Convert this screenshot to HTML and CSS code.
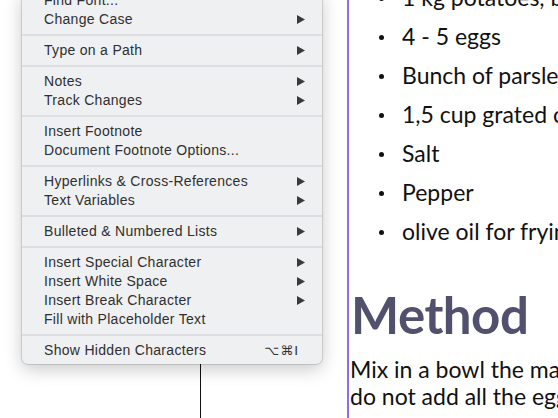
FILE: index.html
```html
<!DOCTYPE html>
<html>
<head>
<meta charset="utf-8">
<link rel="stylesheet" href="styles.css">
</head>
<body>
<div class="page">
  <div class="col-left"></div>
  <div class="frame">
    <ul class="list">
      <li><span class="dot"></span>1 kg potatoes, boiled</li>
      <li><span class="dot"></span>4 - 5 eggs</li>
      <li><span class="dot"></span>Bunch of parsley</li>
      <li><span class="dot"></span>1,5 cup grated cheese</li>
      <li><span class="dot"></span>Salt</li>
      <li><span class="dot"></span>Pepper</li>
      <li><span class="dot"></span>olive oil for frying</li>
    </ul>
    <h1 class="heading">Method</h1>
    <p class="body-text">Mix in a bowl the mashed potatoes,<br>do not add all the eggs at once</p>
  </div>
</div>

<div class="menu">
  <div class="item"><span>Find Font...</span></div>
  <div class="item"><span>Change Case</span><svg class="arrow" viewBox="0 0 8 9"><path d="M0 0L8 4.5L0 9Z"/></svg></div>
  <div class="sep"></div>
  <div class="item"><span>Type on a Path</span><svg class="arrow" viewBox="0 0 8 9"><path d="M0 0L8 4.5L0 9Z"/></svg></div>
  <div class="sep"></div>
  <div class="item"><span>Notes</span><svg class="arrow" viewBox="0 0 8 9"><path d="M0 0L8 4.5L0 9Z"/></svg></div>
  <div class="item"><span>Track Changes</span><svg class="arrow" viewBox="0 0 8 9"><path d="M0 0L8 4.5L0 9Z"/></svg></div>
  <div class="sep"></div>
  <div class="item"><span>Insert Footnote</span></div>
  <div class="item"><span>Document Footnote Options...</span></div>
  <div class="sep"></div>
  <div class="item"><span>Hyperlinks &amp; Cross-References</span><svg class="arrow" viewBox="0 0 8 9"><path d="M0 0L8 4.5L0 9Z"/></svg></div>
  <div class="item"><span>Text Variables</span><svg class="arrow" viewBox="0 0 8 9"><path d="M0 0L8 4.5L0 9Z"/></svg></div>
  <div class="sep"></div>
  <div class="item"><span>Bulleted &amp; Numbered Lists</span><svg class="arrow" viewBox="0 0 8 9"><path d="M0 0L8 4.5L0 9Z"/></svg></div>
  <div class="sep"></div>
  <div class="item"><span>Insert Special Character</span><svg class="arrow" viewBox="0 0 8 9"><path d="M0 0L8 4.5L0 9Z"/></svg></div>
  <div class="item"><span>Insert White Space</span><svg class="arrow" viewBox="0 0 8 9"><path d="M0 0L8 4.5L0 9Z"/></svg></div>
  <div class="item"><span>Insert Break Character</span><svg class="arrow" viewBox="0 0 8 9"><path d="M0 0L8 4.5L0 9Z"/></svg></div>
  <div class="item"><span>Fill with Placeholder Text</span></div>
  <div class="sep"></div>
  <div class="item"><span>Show Hidden Characters</span><span class="shortcut">⌥⌘I</span></div>
</div>
</body>
</html>
```

FILE: styles.css
```css
html, body {
  margin: 0;
  padding: 0;
  background: #ffffff;
  overflow: hidden;
}
body {
  width: 558px;
  height: 418px;
  position: relative;
}
.page {
  display: flex;
  height: 418px;
}
.col-left {
  width: 200px;
  border-right: 1px solid #111111;
  flex: none;
}
.frame {
  margin-left: 146px;
  border-left: 2px solid #8b6df1;
  flex: none;
  width: 210px;
  overflow: hidden;
  white-space: nowrap;
  font-family: "Lato", "Open Sans", sans-serif;
  color: #111111;
}
.list {
  list-style: none;
  margin: -23px 0 0 0;
  padding: 0 0 0 30px;
}
.list li {
  display: flex;
  align-items: center;
  height: 39px;
  font-size: 23px;
}
.dot {
  width: 5px;
  height: 5px;
  border-radius: 50%;
  background: #111111;
  margin-right: 18px;
  position: relative;
  top: 2px;
  flex: none;
}
.heading {
  margin: 37px 0 0 2px;
  font-size: 51px;
  line-height: 56px;
  letter-spacing: -0.5px;
  font-weight: 700;
  color: #51516f;
}
.body-text {
  margin: 13px 0 0 1px;
  font-size: 23px;
  line-height: 27px;
}
.menu {
  position: absolute;
  left: 22px;
  top: -9px;
  width: 300px;
  padding-bottom: 4px;
  background: #eff0f2;
  border-radius: 0 0 6px 6px;
  box-shadow: 0 0 0 1px rgba(0, 0, 0, 0.12), 0 5px 18px rgba(0, 0, 0, 0.22);
  font-family: "Liberation Sans", Arial, sans-serif;
  font-size: 14px;
  letter-spacing: 0.3px;
  color: #2f2f2f;
}
.item {
  height: 19px;
  line-height: 19px;
  padding: 0 17px 0 22px;
  display: flex;
  align-items: center;
  justify-content: space-between;
}
.arrow {
  width: 8px;
  height: 9px;
  fill: #3a3a3a;
}
.shortcut {
  font-family: "DejaVu Sans", sans-serif;
  font-size: 13px;
  margin-right: 6px;
  letter-spacing: 1px;
  color: #333333;
}
.sep {
  height: 2px;
  background: #dcdee1;
  margin: 5px 0;
}
```
